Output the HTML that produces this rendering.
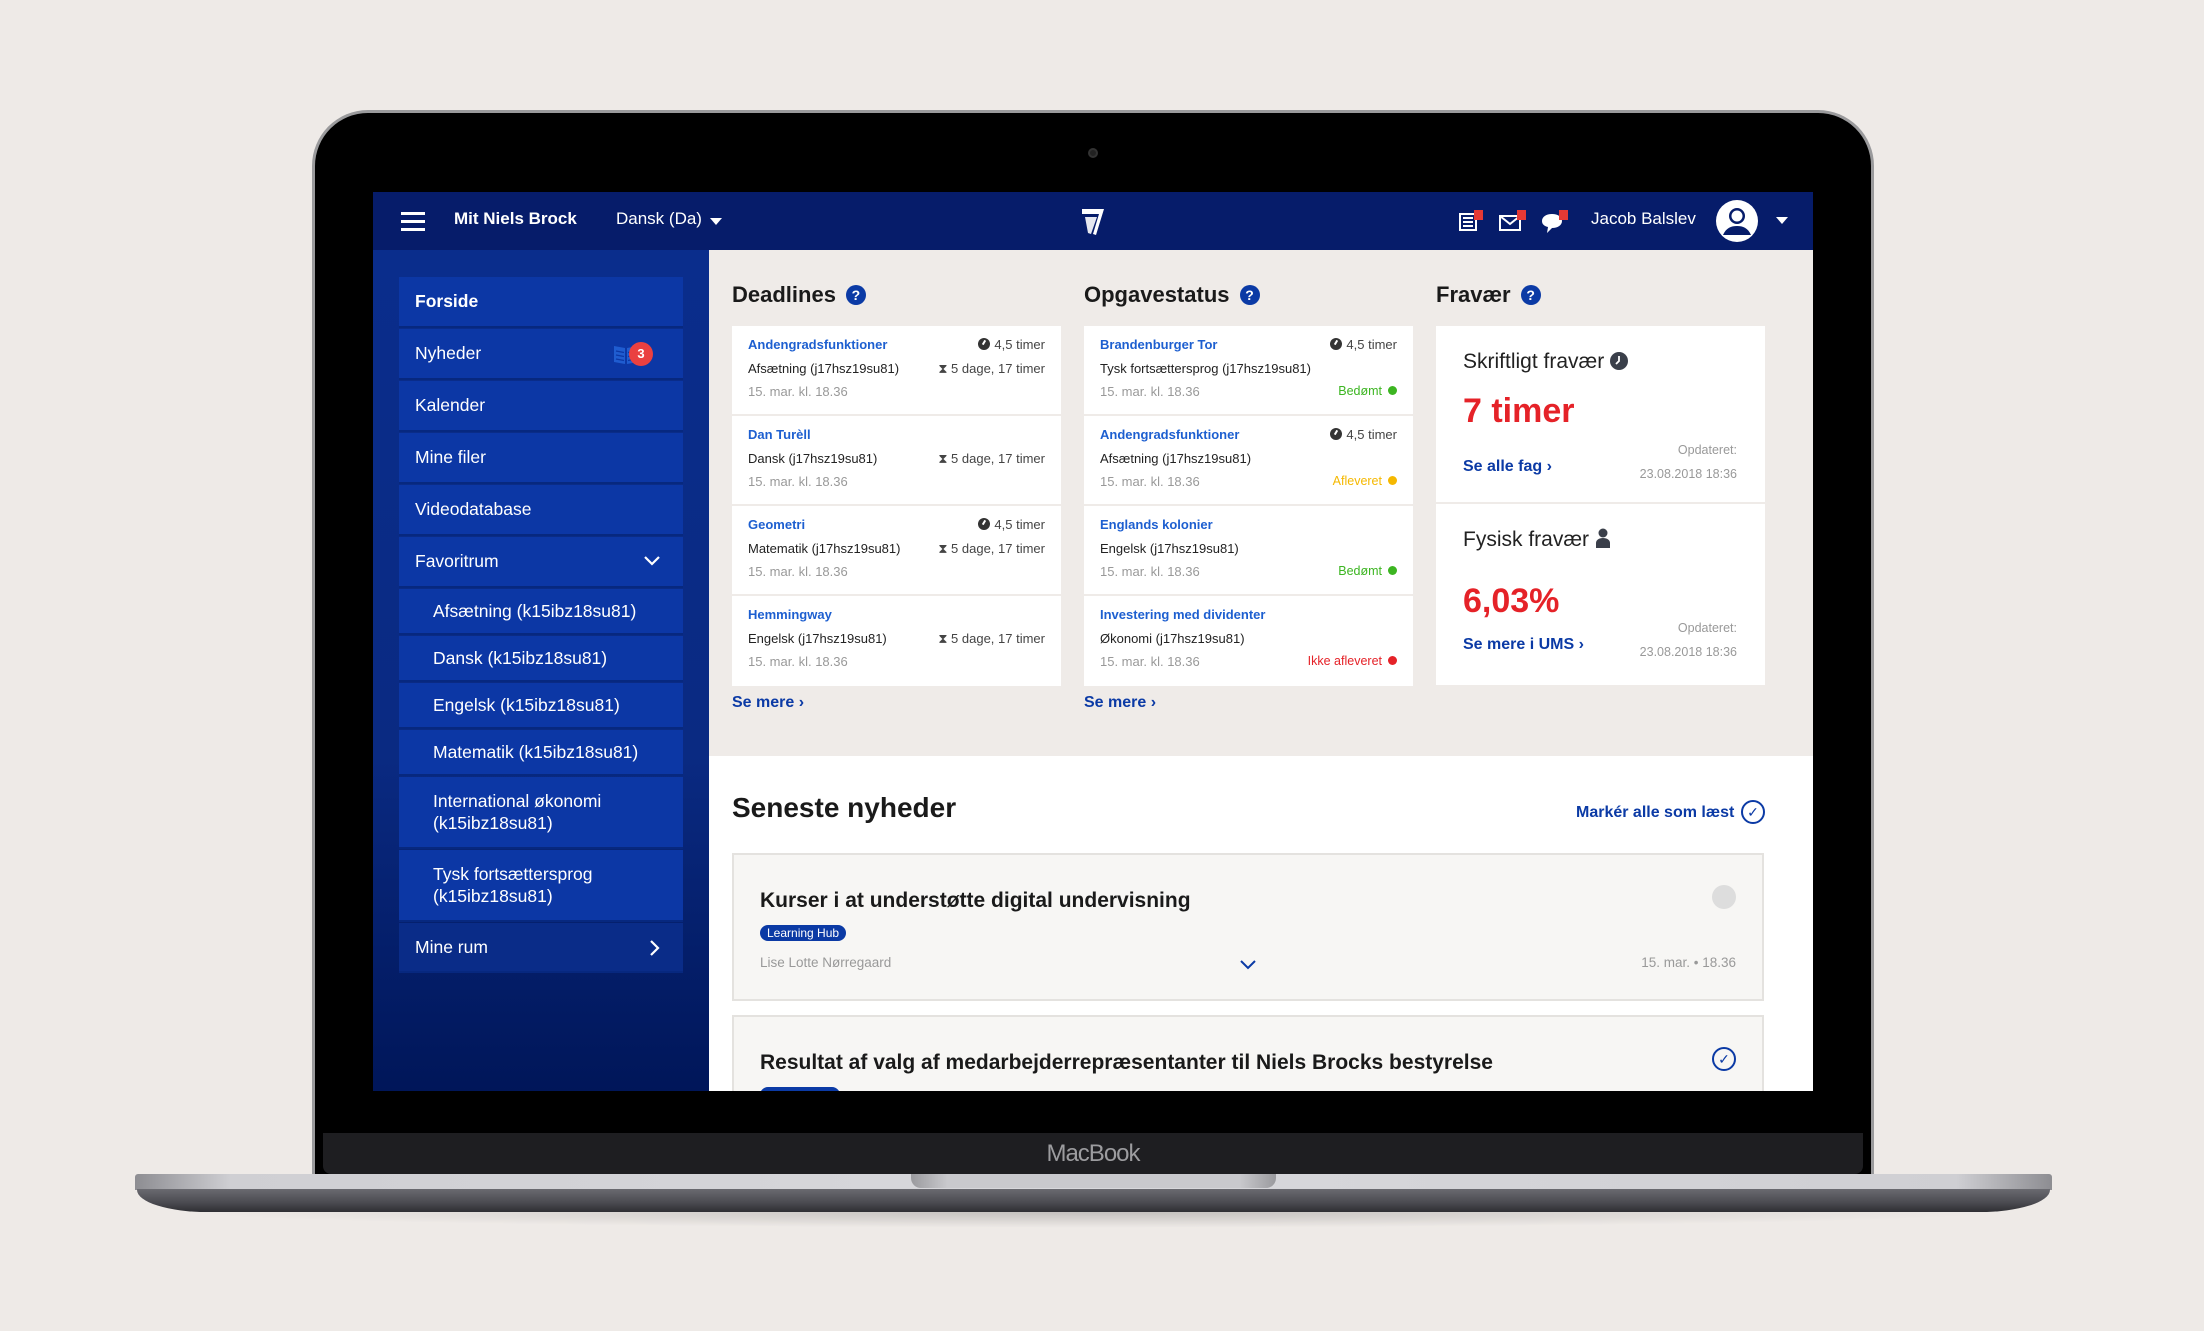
<!DOCTYPE html>
<html><head><meta charset="utf-8"><style>
*{margin:0;padding:0;box-sizing:border-box}
body{width:2204px;height:1331px;background:#eeeae7;position:relative;overflow:hidden;font-family:"Liberation Sans",sans-serif}
.a{position:absolute}
.lid{left:312px;top:110px;width:1562px;height:1066px;background:#000;border-radius:56px 56px 0 0;border:3px solid #9a9a9c;border-bottom:none}
.screen{left:373px;top:192px;width:1440px;height:899px;background:#fff;overflow:hidden}
.hdr{left:0;top:0;width:1440px;height:58px;background:#061c6a}
.side{left:0;top:58px;width:336px;height:841px;background:linear-gradient(#0a2d8c,#0a2a82 60%,#001659)}
.si{position:absolute;left:26px;width:284px;background:#0c37a5;color:#fff;font-size:17.5px;border-bottom:2px solid #07287f;padding-left:16px;display:flex;align-items:center}
.sub{padding-left:34px}
.main{left:336px;top:58px;width:1104px;height:506px;background:#efebe8}
.h2{font-size:22px;color:#1a1a1a;font-weight:bold}
.q{display:inline-block;width:20px;height:20px;border-radius:50%;background:#0b3aa5;color:#fff;font-size:14px;text-align:center;line-height:20px;vertical-align:2px;margin-left:10px}
.card{background:#fff;width:329px}
.row{position:relative;height:90px;border-bottom:2px solid #efebe8;font-size:13px}
.t1{position:absolute;left:16px;top:11px;color:#1d5fd0;font-weight:bold}
.t2{position:absolute;left:16px;top:35px;color:#222}
.t3{position:absolute;left:16px;top:58px;color:#999}
.r1{position:absolute;right:16px;top:11px;color:#444}
.r2{position:absolute;right:16px;top:35px;color:#444}
.r3{position:absolute;right:16px;top:58px;font-size:12.5px}
.dot{display:inline-block;width:9px;height:9px;border-radius:50%;margin-left:6px}
.ck{display:inline-block;width:12px;height:12px;border-radius:50%;background:#333;vertical-align:-1px;margin-right:4px;position:relative}
.ck:after{content:"";position:absolute;left:5px;top:2px;width:2px;height:5px;background:#fff;transform:rotate(30deg)}
.more{font-size:16px;color:#0b3aa5;font-weight:bold}
.news{background:#f7f6f4;border:2px solid #e4e2df;width:1032px}
</style></head><body>
<div class="a lid"></div>
<div class="a" style="left:1088px;top:148px;width:10px;height:10px;border-radius:50%;background:#222;border:2px solid #333"></div>
<div class="a screen">
 <div class="a hdr">
  <div class="a" style="left:28px;top:20px;width:24px;height:3px;background:#fff;box-shadow:0 8px 0 #fff,0 16px 0 #fff"></div>
  <div class="a" style="left:81px;top:17px;color:#fff;font-size:17px;font-weight:bold">Mit Niels Brock</div>
  <div class="a" style="left:243px;top:17px;color:#fff;font-size:17px">Dansk (Da)</div>
  <div class="a" style="left:337px;top:26px;border:6px solid transparent;border-top:7px solid #fff"></div>
  <svg class="a" style="left:708px;top:16px" width="24" height="28" viewBox="0 0 24 28"><path d="M1 1h22l-8 26-3-1 6-20H1z" fill="#fff"/><path d="M4 9h12l-6 17-3-1z" fill="#fff" opacity=".9"/></svg>
  <svg class="a" style="left:1085px;top:18px" width="26" height="24" viewBox="0 0 26 24"><path d="M2 4h16v16H2z" fill="none" stroke="#fff" stroke-width="2"/><path d="M5 8h10M5 12h10M5 16h10" stroke="#fff" stroke-width="2"/><rect x="16" y="0" width="9" height="10" fill="#e53935"/></svg>
  <svg class="a" style="left:1126px;top:18px" width="28" height="24" viewBox="0 0 28 24"><path d="M1 6h20v14H1zM1 6l10 8 10-8" fill="none" stroke="#fff" stroke-width="2"/><rect x="18" y="0" width="9" height="10" fill="#e53935"/></svg>
  <svg class="a" style="left:1168px;top:18px" width="28" height="26" viewBox="0 0 28 26"><path d="M11 4c6 0 10 3 10 7s-4 7-10 7l-5 5 1-6C3 16 1 14 1 11c0-4 4-7 10-7z" fill="#fff"/><rect x="18" y="0" width="9" height="10" fill="#e53935"/></svg>
  <div class="a" style="left:1218px;top:17px;color:#fff;font-size:17px">Jacob Balslev</div>
  <svg class="a" style="left:1342px;top:7px" width="44" height="44" viewBox="0 0 44 44"><circle cx="22" cy="22" r="21" fill="#fff"/><circle cx="22" cy="17" r="8" fill="#061c6a"/><path d="M8 36c3-7 8-9 14-9s11 2 14 9" fill="#061c6a"/><circle cx="22" cy="17" r="5.5" fill="#fff"/></svg>
  <div class="a" style="left:1403px;top:25px;border:6px solid transparent;border-top:7px solid #fff"></div>
 </div>
 <div class="a side">
  <div class="si" style="top:27px;height:51px;font-weight:bold">Forside</div>
  <div class="si" style="top:79px;height:51px">Nyheder
   <svg style="position:absolute;left:214px;top:14px" width="26" height="22" viewBox="0 0 26 22"><path d="M1 3l11 2v16L1 19zM25 3l-11 2v16l11-2z" fill="#1f5cd0"/><path d="M3 8l8 1.5M3 12l8 1.5M3 16l8 1.5M23 8l-8 1.5M23 12l-8 1.5M23 16l-8 1.5" stroke="#0c37a5" stroke-width="1.2"/></svg>
   <span style="position:absolute;left:230px;top:13px;width:24px;height:24px;border-radius:50%;background:#ea4040;font-size:13px;font-weight:bold;text-align:center;line-height:24px">3</span></div>
  <div class="si" style="top:131px;height:51px">Kalender</div>
  <div class="si" style="top:183px;height:51px">Mine filer</div>
  <div class="si" style="top:235px;height:51px">Videodatabase</div>
  <div class="si" style="top:287px;height:51px">Favoritrum<svg style="position:absolute;right:22px;top:18px" width="18" height="12" viewBox="0 0 18 12"><path d="M2 2l7 7 7-7" stroke="#fff" stroke-width="2.2" fill="none"/></svg></div>
  <div class="si sub" style="top:339px;height:46px">Afsætning (k15ibz18su81)</div>
  <div class="si sub" style="top:386px;height:46px">Dansk (k15ibz18su81)</div>
  <div class="si sub" style="top:433px;height:46px">Engelsk (k15ibz18su81)</div>
  <div class="si sub" style="top:480px;height:46px">Matematik (k15ibz18su81)</div>
  <div class="si sub" style="top:527px;height:72px;line-height:22px">International økonomi<br>(k15ibz18su81)</div>
  <div class="si sub" style="top:600px;height:72px;line-height:22px">Tysk fortsættersprog<br>(k15ibz18su81)</div>
  <div class="si" style="top:673px;height:50px;background:#0a2c88">Mine rum<svg style="position:absolute;right:22px;top:16px" width="12" height="18" viewBox="0 0 12 18"><path d="M2 2l7 7-7 7" stroke="#fff" stroke-width="2.2" fill="none"/></svg></div>
 </div>
 <div class="a main">
  <div class="a h2" style="left:23px;top:32px">Deadlines<span class="q">?</span></div>
  <div class="a h2" style="left:375px;top:32px">Opgavestatus<span class="q">?</span></div>
  <div class="a h2" style="left:727px;top:32px">Fravær<span class="q">?</span></div>
  <div class="a card" style="left:23px;top:76px">
   <div class="row"><span class="t1">Andengradsfunktioner</span><span class="r1"><i class="ck"></i>4,5 timer</span><span class="t2">Afsætning (j17hsz19su81)</span><span class="r2">⧗ 5 dage, 17 timer</span><span class="t3">15. mar. kl. 18.36</span></div>
   <div class="row"><span class="t1">Dan Turèll</span><span class="t2">Dansk (j17hsz19su81)</span><span class="r2">⧗ 5 dage, 17 timer</span><span class="t3">15. mar. kl. 18.36</span></div>
   <div class="row"><span class="t1">Geometri</span><span class="r1"><i class="ck"></i>4,5 timer</span><span class="t2">Matematik (j17hsz19su81)</span><span class="r2">⧗ 5 dage, 17 timer</span><span class="t3">15. mar. kl. 18.36</span></div>
   <div class="row" style="border:none"><span class="t1">Hemmingway</span><span class="t2">Engelsk (j17hsz19su81)</span><span class="r2">⧗ 5 dage, 17 timer</span><span class="t3">15. mar. kl. 18.36</span></div>
  </div>
  <div class="a card" style="left:375px;top:76px">
   <div class="row"><span class="t1">Brandenburger Tor</span><span class="r1"><i class="ck"></i>4,5 timer</span><span class="t2">Tysk fortsættersprog (j17hsz19su81)</span><span class="t3">15. mar. kl. 18.36</span><span class="r3" style="color:#3cb521">Bedømt<i class="dot" style="background:#3cb521"></i></span></div>
   <div class="row"><span class="t1">Andengradsfunktioner</span><span class="r1"><i class="ck"></i>4,5 timer</span><span class="t2">Afsætning (j17hsz19su81)</span><span class="t3">15. mar. kl. 18.36</span><span class="r3" style="color:#f5b800">Afleveret<i class="dot" style="background:#f5b800"></i></span></div>
   <div class="row"><span class="t1">Englands kolonier</span><span class="t2">Engelsk (j17hsz19su81)</span><span class="t3">15. mar. kl. 18.36</span><span class="r3" style="color:#3cb521">Bedømt<i class="dot" style="background:#3cb521"></i></span></div>
   <div class="row" style="border:none"><span class="t1">Investering med dividenter</span><span class="t2">Økonomi (j17hsz19su81)</span><span class="t3">15. mar. kl. 18.36</span><span class="r3" style="color:#e52228">Ikke afleveret<i class="dot" style="background:#e52228"></i></span></div>
  </div>
  <div class="a card" style="left:727px;top:76px;height:359px">
   <div style="position:relative;height:178px;border-bottom:2px solid #efebe8">
    <div class="a" style="left:27px;top:24px;font-size:21px;color:#222">Skriftligt fravær <svg width="18" height="18" viewBox="0 0 18 18" style="vertical-align:-2px"><circle cx="9" cy="9" r="9" fill="#3a3f4a"/><path d="M9 4v5l-3 3" stroke="#fff" stroke-width="1.8" fill="none"/></svg></div>
    <div class="a" style="left:27px;top:66px;font-size:34px;color:#e52228;font-weight:bold">7 timer</div>
    <div class="a" style="left:27px;top:132px;font-size:16px;color:#0b3aa5;font-weight:bold">Se alle fag ›</div>
    <div class="a" style="right:28px;top:112px;font-size:12.5px;color:#999;text-align:right;line-height:24px">Opdateret:<br>23.08.2018 18:36</div>
   </div>
   <div style="position:relative;height:179px">
    <div class="a" style="left:27px;top:24px;font-size:21px;color:#222">Fysisk fravær <svg width="16" height="20" viewBox="0 0 16 20" style="vertical-align:-2px"><circle cx="8" cy="5" r="4.5" fill="#3a3f4a"/><path d="M1 20v-5c0-3 3-5 7-5s7 2 7 5v5z" fill="#3a3f4a"/></svg></div>
    <div class="a" style="left:27px;top:78px;font-size:34px;color:#e52228;font-weight:bold">6,03%</div>
    <div class="a" style="left:27px;top:132px;font-size:16px;color:#0b3aa5;font-weight:bold">Se mere i UMS ›</div>
    <div class="a" style="right:28px;top:112px;font-size:12.5px;color:#999;text-align:right;line-height:24px">Opdateret:<br>23.08.2018 18:36</div>
   </div>
  </div>
  <div class="a more" style="left:23px;top:444px">Se mere ›</div>
  <div class="a more" style="left:375px;top:444px">Se mere ›</div>
 </div>
 <div class="a" style="left:359px;top:600px;font-size:28px;font-weight:bold;color:#1a1a1a">Seneste nyheder</div>
 <div class="a" style="left:1203px;top:612px;font-size:16px;font-weight:bold;color:#0b3aa5">Markér alle som læst</div>
 <div class="a" style="left:1368px;top:608px;width:24px;height:24px;border:2px solid #0b3aa5;border-radius:50%;color:#0b3aa5;font-size:14px;text-align:center;line-height:20px">✓</div>
 <div class="a news" style="left:359px;top:661px;height:148px">
  <div class="a" style="left:26px;top:34px;font-size:21px;font-weight:bold;color:#1a1a1a">Kurser i at understøtte digital undervisning</div>
  <div class="a" style="left:26px;top:70px;background:#0b3aa5;color:#fff;font-size:12px;padding:1px 7px;border-radius:8px">Learning Hub</div>
  <div class="a" style="left:26px;top:100px;font-size:13.5px;color:#999">Lise Lotte Nørregaard</div>
  <svg class="a" style="left:505px;top:104px" width="18" height="12" viewBox="0 0 18 12"><path d="M2 2l7 7 7-7" stroke="#0b3aa5" stroke-width="2" fill="none"/></svg>
  <div class="a" style="right:26px;top:100px;font-size:13.5px;color:#999">15. mar. • 18.36</div>
  <div class="a" style="right:26px;top:30px;width:24px;height:24px;border-radius:50%;background:#ddd"></div>
 </div>
 <div class="a news" style="left:359px;top:823px;height:100px">
  <div class="a" style="left:26px;top:34px;font-size:21px;font-weight:bold;color:#1a1a1a">Resultat af valg af medarbejderrepræsentanter til Niels Brocks bestyrelse</div>
  <div class="a" style="right:26px;top:30px;width:24px;height:24px;border:2px solid #0b3aa5;border-radius:50%;color:#0b3aa5;font-size:14px;text-align:center;line-height:20px">✓</div>
  <div class="a" style="left:26px;top:70px;width:80px;height:16px;background:#0b3aa5;border-radius:8px"></div>
 </div>
</div>
<div class="a" style="left:323px;top:1133px;width:1540px;height:41px;background:#1e1e21;border-radius:0 0 8px 8px"></div>
<div class="a" style="left:323px;top:1140px;width:1540px;text-align:center;font-size:24px;color:#9c9c9f;letter-spacing:-1px">MacBook</div>
<div class="a" style="left:135px;top:1174px;width:1917px;height:16px;background:linear-gradient(90deg,#8d8d92,#cfcfd3 5%,#d8d8dc 50%,#cfcfd3 95%,#8d8d92);border-radius:3px 3px 0 0"></div>
<div class="a" style="left:911px;top:1174px;width:365px;height:14px;background:linear-gradient(90deg,#9a9a9e,#c9c9cd 10%,#c9c9cd 90%,#9a9a9e);border-radius:0 0 10px 10px"></div>
<div class="a" style="left:137px;top:1189px;width:1913px;height:23px;background:linear-gradient(#6a6a70,#4a4a50 60%,#2e2e33);border-radius:0 0 70px 70px/0 0 22px 22px"></div>
<div class="a" style="left:180px;top:1212px;width:1827px;height:16px;background:radial-gradient(ellipse at center top,rgba(0,0,0,.18),rgba(0,0,0,0) 70%)"></div>
</body></html>
